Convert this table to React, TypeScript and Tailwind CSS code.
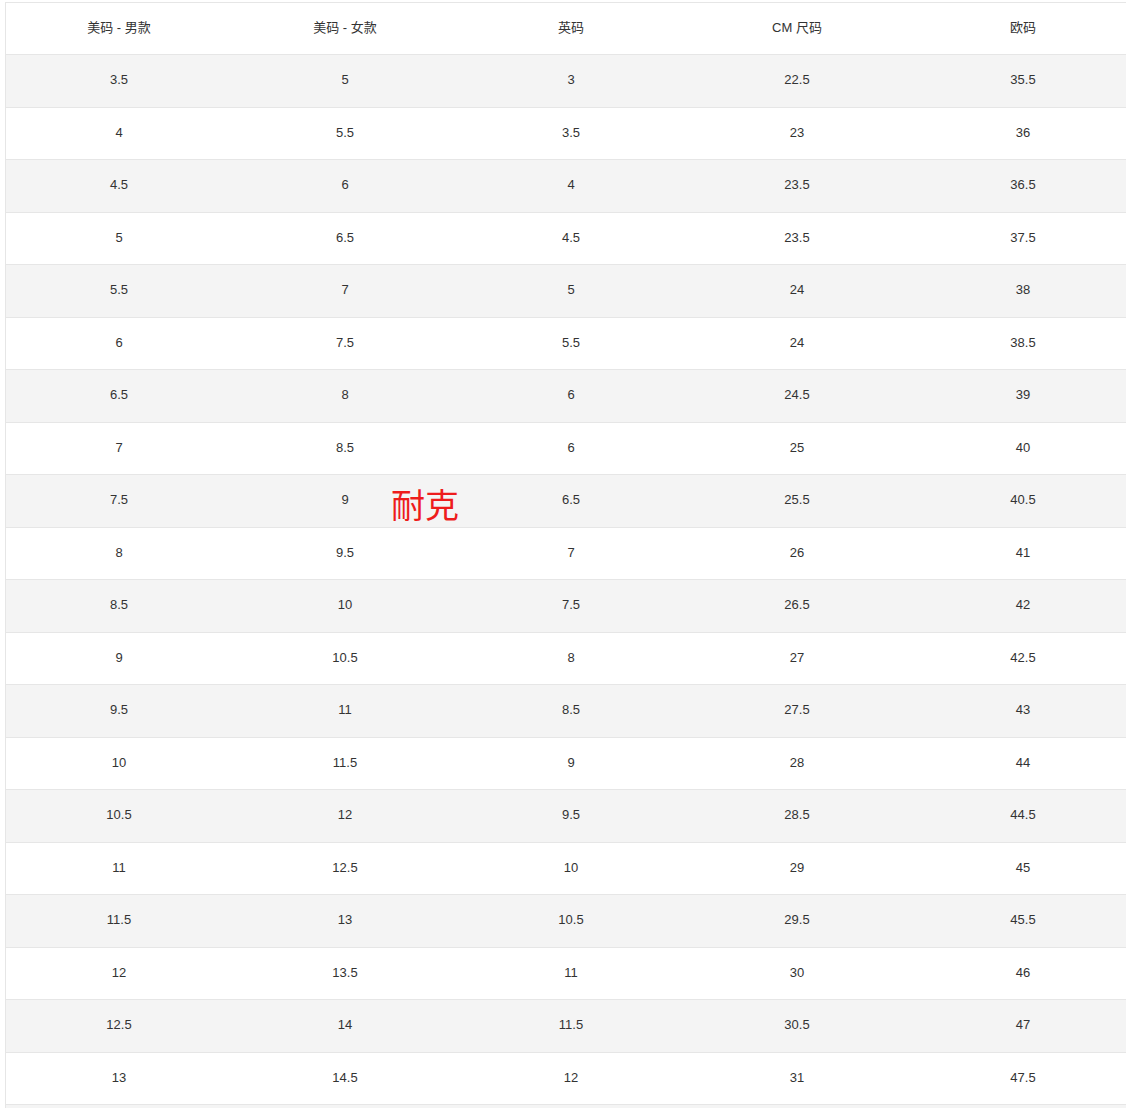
import React from "react";

const headers = ["美码 - 男款", "美码 - 女款", "英码", "CM 尺码", "欧码"];

const rows = [
  ["3.5", "5", "3", "22.5", "35.5"],
  ["4", "5.5", "3.5", "23", "36"],
  ["4.5", "6", "4", "23.5", "36.5"],
  ["5", "6.5", "4.5", "23.5", "37.5"],
  ["5.5", "7", "5", "24", "38"],
  ["6", "7.5", "5.5", "24", "38.5"],
  ["6.5", "8", "6", "24.5", "39"],
  ["7", "8.5", "6", "25", "40"],
  ["7.5", "9", "6.5", "25.5", "40.5"],
  ["8", "9.5", "7", "26", "41"],
  ["8.5", "10", "7.5", "26.5", "42"],
  ["9", "10.5", "8", "27", "42.5"],
  ["9.5", "11", "8.5", "27.5", "43"],
  ["10", "11.5", "9", "28", "44"],
  ["10.5", "12", "9.5", "28.5", "44.5"],
  ["11", "12.5", "10", "29", "45"],
  ["11.5", "13", "10.5", "29.5", "45.5"],
  ["12", "13.5", "11", "30", "46"],
  ["12.5", "14", "11.5", "30.5", "47"],
  ["13", "14.5", "12", "31", "47.5"],
];

export default function App() {
  return (
    <div className="h-[1108px] w-[1126px] overflow-hidden bg-white pl-[5px] pt-[2px] font-['Liberation_Sans','Noto_Sans_CJK_SC',sans-serif] text-[13px] text-[#333]">
      <div className="relative w-[1131px] border-l border-t border-[#e6e6e6]">
        <div className="grid h-[52px] grid-cols-5 items-center border-b border-[#e6e6e6] bg-white pb-[2px]">
          {headers.map((h) => (
            <div key={h} className="text-center">
              {h}
            </div>
          ))}
        </div>
        {rows.map((r, i) => (
          <div
            key={i}
            className={
              i % 2 === 0
                ? "grid h-[52.5px] grid-cols-5 items-center border-b border-[#e6e6e6] bg-[#f4f4f4] pb-[2px]"
                : "grid h-[52.5px] grid-cols-5 items-center border-b border-[#e6e6e6] bg-white pb-[2px]"
            }
          >
            {r.map((c, j) => (
              <div key={j} className="text-center">
                {c}
              </div>
            ))}
          </div>
        ))}
        {/* next row, only its top edge shows */}
        <div className="h-[52.5px] bg-[#f4f4f4]" />
        <div className="absolute left-[385px] top-[486px] text-[34px] leading-none text-[#ee1c1c]">
          耐克
        </div>
      </div>
    </div>
  );
}
